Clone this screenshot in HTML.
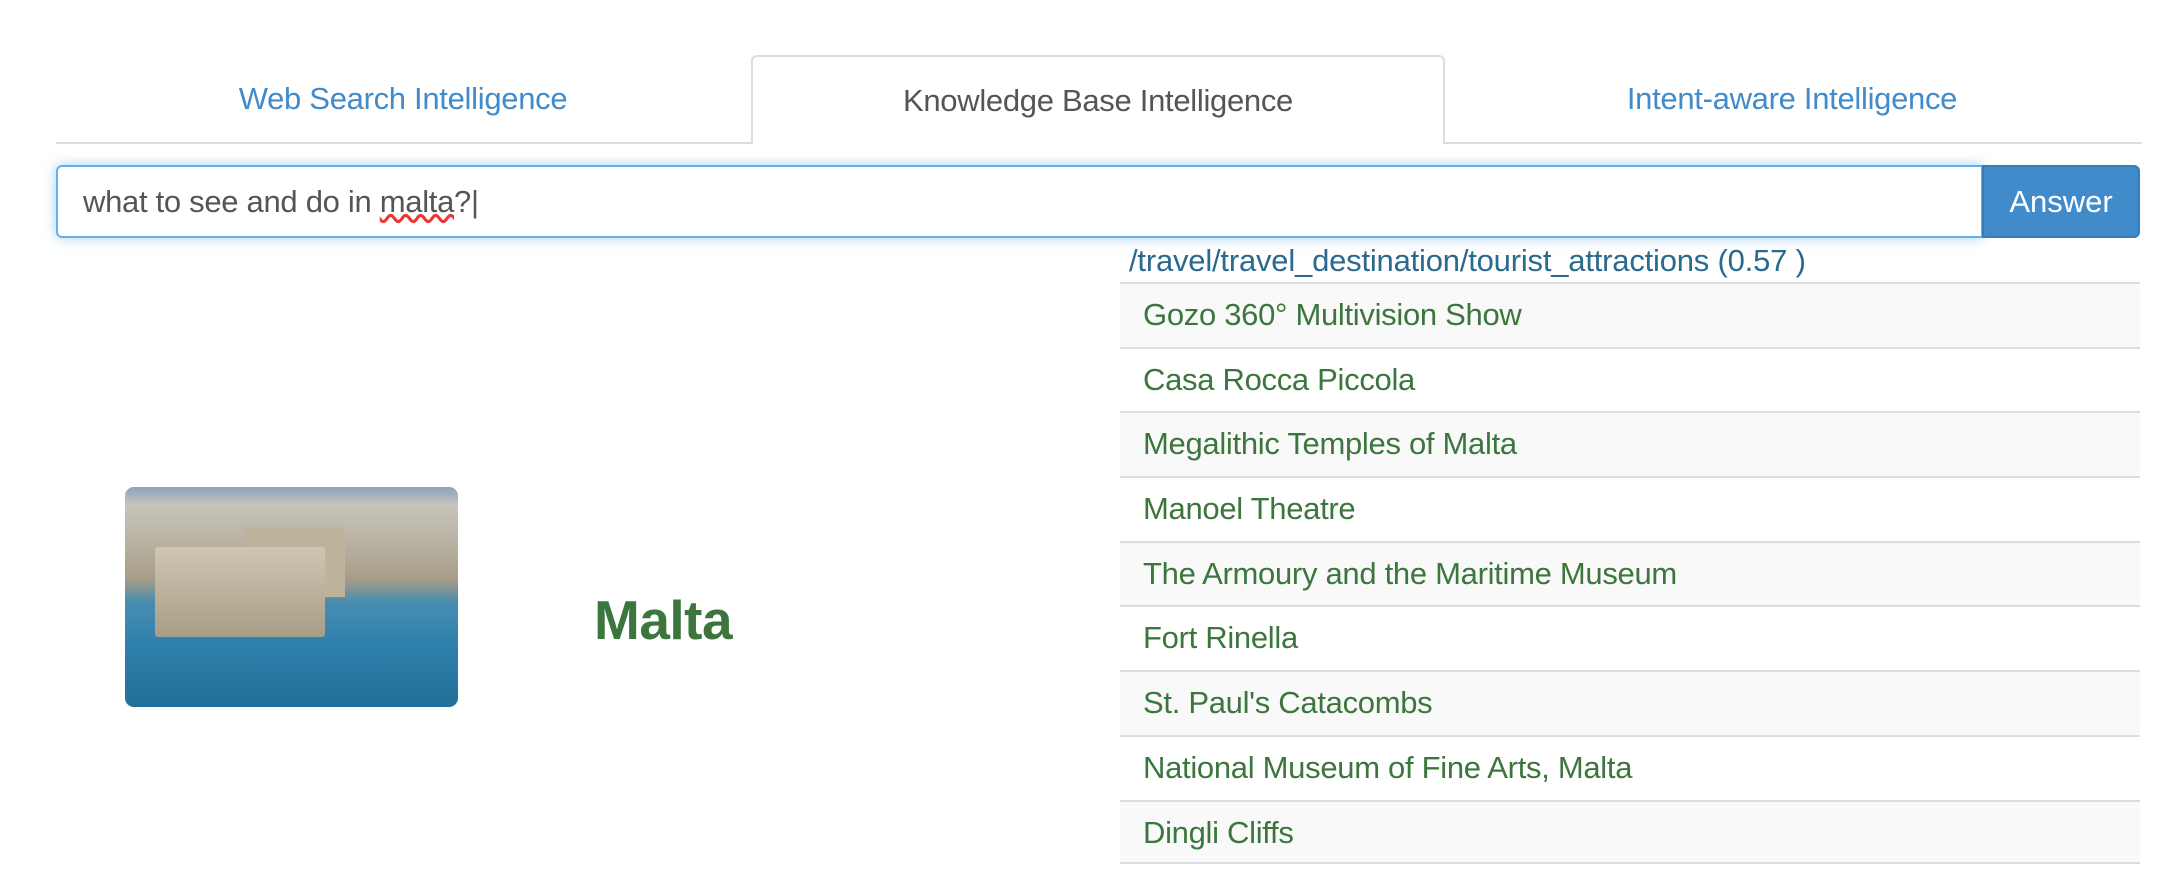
<!DOCTYPE html>
<html><head><meta charset="utf-8"><style>
*{box-sizing:border-box;margin:0;padding:0}
body{width:2182px;height:872px;background:#fff;font-family:"Liberation Sans",Arial,sans-serif;position:relative;overflow:hidden}
.tabline{position:absolute;left:56px;top:142px;width:2086px;height:2px;background:#ddd}
.tab{position:absolute;top:55px;height:89px;width:694px;text-align:center;font-size:31px;line-height:88px;color:#428bca;letter-spacing:-0.3px}
.tab.active{background:#fff;border:2px solid #ddd;border-bottom:none;border-radius:6px 6px 0 0;color:#555}
.input{position:absolute;left:56px;top:165px;width:1927px;height:73px;border:2px solid #66afe9;border-radius:6px 0 0 6px;box-shadow:0 0 12px rgba(102,175,233,.6);font-size:31px;color:#555;padding-left:25px;line-height:69px;letter-spacing:-0.3px}
.btn{position:absolute;left:1982px;top:165px;width:158px;height:73px;background:#428bca;border:2px solid #357ebd;border-radius:0 6px 6px 0;color:#fff;font-size:31px;text-align:center;line-height:69px}
.head{position:absolute;left:1129px;top:243px;font-size:31px;color:#2a6a8f;letter-spacing:-0.2px}
.list{position:absolute;left:1120px;top:282px;width:1020px}
.row{height:64.7px;border-top:2px solid #ddd;font-size:31px;color:#3c763d;padding-left:23px;line-height:62px;letter-spacing:-0.3px}
.row:nth-child(odd){background:#f9f9f9}
.row:last-child{border-bottom:2px solid #ddd}
.img{position:absolute;left:125px;top:487px;width:333px;height:220px;border-radius:9px;overflow:hidden;background:linear-gradient(#8aa3bd 0%,#c7c4bc 8%,#b9b2a3 25%,#a89c85 42%,#4a8db0 52%,#2f82ad 70%,#236f99 100%)}
.fort{position:absolute;left:30px;top:60px;width:170px;height:90px;background:linear-gradient(#cfc6b2,#a89d87);border-radius:3px}
.fort2{position:absolute;left:120px;top:40px;width:100px;height:70px;background:#beb39d}
.malta{position:absolute;left:594px;top:588px;font-size:55px;font-weight:bold;color:#3c763d;letter-spacing:-0.5px}
</style></head><body>
<div class="tabline"></div>
<div class="tab" style="left:56px">Web Search Intelligence</div>
<div class="tab active" style="left:751px">Knowledge Base Intelligence</div>
<div class="tab" style="left:1445px">Intent-aware Intelligence</div>
<div class="input">what to see and do in <span style="text-decoration:underline wavy #e33">malta</span>?|</div>
<div class="btn">Answer</div>
<div class="head">/travel/travel_destination/tourist_attractions (0.57 )</div>
<div class="list">
<div class="row">Gozo 360° Multivision Show</div>
<div class="row">Casa Rocca Piccola</div>
<div class="row">Megalithic Temples of Malta</div>
<div class="row">Manoel Theatre</div>
<div class="row">The Armoury and the Maritime Museum</div>
<div class="row">Fort Rinella</div>
<div class="row">St. Paul's Catacombs</div>
<div class="row">National Museum of Fine Arts, Malta</div>
<div class="row">Dingli Cliffs</div>
</div>
<div class="img"><div class="fort2"></div><div class="fort"></div></div>
<div class="malta">Malta</div>
</body></html>
